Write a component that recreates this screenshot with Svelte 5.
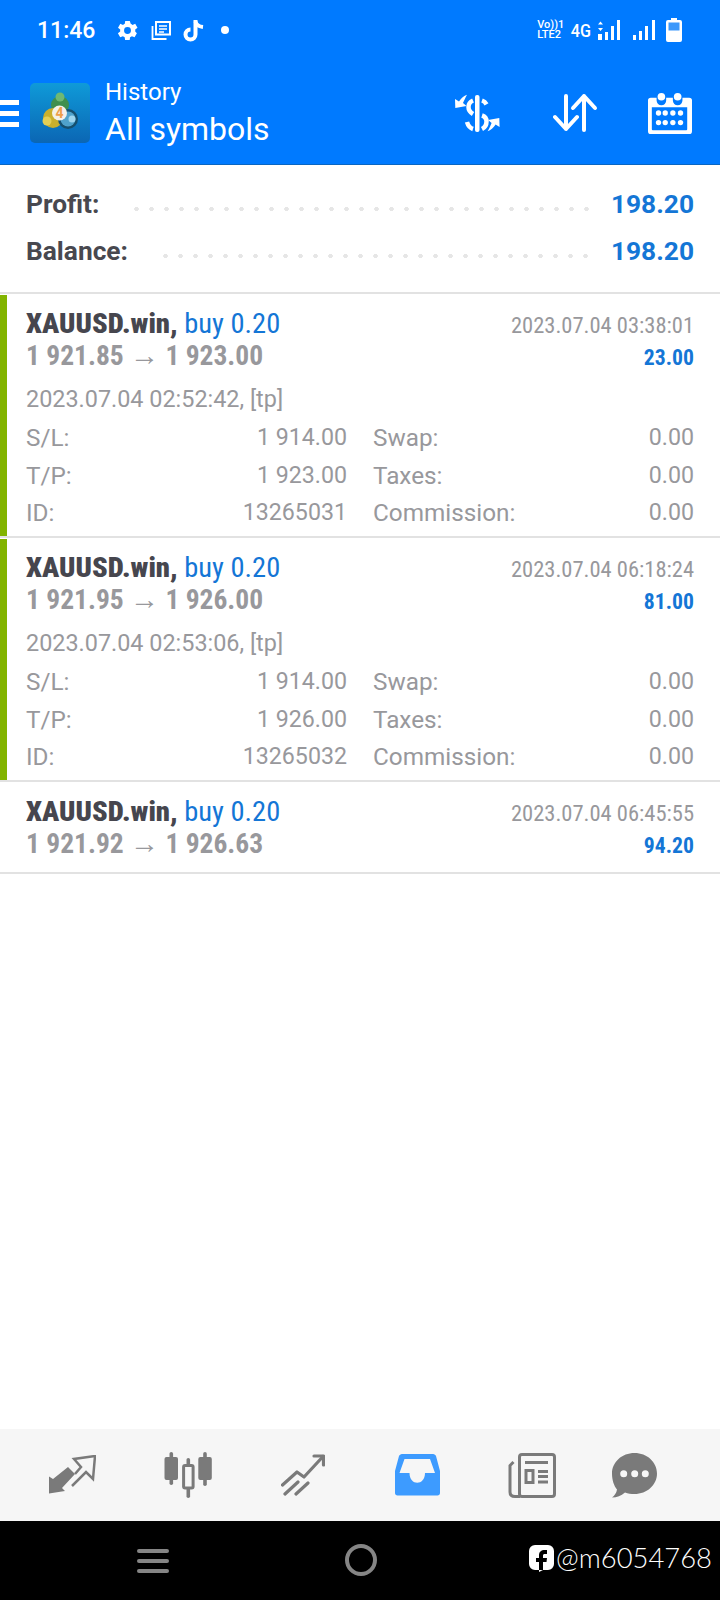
<script>
	const deals = [
		{ open: '1 921.85', close: '1 923.00', time: '2023.07.04 03:38:01', profit: '23.00', opened: '2023.07.04 02:52:42, [tp]', sl: '1 914.00', tp: '1 923.00', id: '13265031', expanded: true },
		{ open: '1 921.95', close: '1 926.00', time: '2023.07.04 06:18:24', profit: '81.00', opened: '2023.07.04 02:53:06, [tp]', sl: '1 914.00', tp: '1 926.00', id: '13265032', expanded: true },
		{ open: '1 921.92', close: '1 926.63', time: '2023.07.04 06:45:55', profit: '94.20', expanded: false }
	];
</script>

<div class="screen">
	<header class="top">
		<div class="status">
			<span class="clock">11:46</span>
			<div class="status-left">
				<svg width="25" height="25" viewBox="0 0 24 24" fill="#fff"><path fill-rule="evenodd" d="M19.400 13a7.500 7.500 0 0 0 0-2l2.200-1.700-2.200-3.700-2.600 1a7.600 7.600 0 0 0-1.700-1L14.200 2.800H9.800l-.4 2.800a7.600 7.600 0 0 0-1.700 1l-2.600-1-2.200 3.700L5 11a7.500 7.500 0 0 0 0 2l-2.200 1.700 2.200 3.700 2.600-1a7.600 7.600 0 0 0 1.700 1l.4 2.800h4.400l.4-2.800a7.600 7.600 0 0 0 1.700-1l2.600 1 2.200-3.700zM12 15.300a3.300 3.300 0 1 1 0-6.600 3.300 3.300 0 0 1 0 6.600z"/></svg>
				<svg width="21" height="21" viewBox="0 0 21 21" fill="none" stroke="#fff" stroke-width="2"><path d="M5 2h14v12.500H5z"/><path d="M1.500 6v13h14" stroke-width="1.800"/><path d="M8 6h8M8 9h8M8 12h5" stroke-width="1.700"/></svg>
				<svg width="21" height="23" viewBox="0 0 21 23" fill="none" stroke="#fff" stroke-width="4"><path d="M12.500 1v14.500a5 5 0 1 1-5-5"/><path d="M12.500 2.500c.5 3 3 5 7.500 5.500"/></svg>
				<span class="dot"></span>
			</div>
			<div class="status-right">
				<span class="volte">Vo))1<br />LTE2</span>
				<span class="net">4G</span>
				<svg width="22" height="20" viewBox="0 0 22 20" fill="#fff"><path d="M2.500 1.500l2.500 3H0zM2.500 11L0 8h5zM0 14h4v6H0zM7 12h3v8H7zM13 6h3v14h-3zM19 0h3v20h-3z"/></svg>
				<svg class="sim2" width="22" height="20" viewBox="0 0 22 20" fill="#fff"><path d="M0 15h3v5H0zM6 11h3v9H6zM12 6h3v14h-3zM19 0h3v20h-3z"/></svg>
				<svg class="battery" width="16" height="24" viewBox="0 0 16 24"><path fill="#fff" d="M5 0h6v2h3a2 2 0 0 1 2 2v18a2 2 0 0 1-2 2H2a2 2 0 0 1-2-2V4a2 2 0 0 1 2-2h3z"/><rect x="2.500" y="4.500" width="11" height="8" fill="#3c98fb"/></svg>
			</div>
		</div>
		<div class="bar">
			<div class="burger"><i></i><i></i><i></i></div>
			<svg class="logo" width="60" height="60" viewBox="0 0 60 60">
				<defs>
					<linearGradient id="tile" x1="0" y1="0" x2="0" y2="1"><stop offset="0" stop-color="#0f9ad8" /><stop offset="1" stop-color="#0b66b4" /></linearGradient>
				</defs>
				<rect width="60" height="60" rx="5" fill="url(#tile)" />
				<circle cx="30" cy="22" r="9" fill="#3f8f4e" />
				<circle cx="30" cy="14" r="4.500" fill="#6fb873" />
				<circle cx="23" cy="35" r="10" fill="#c9b02c" />
				<circle cx="17" cy="38" r="4.500" fill="#e3cf55" />
				<circle cx="38" cy="36" r="10" fill="#16506f" />
				<circle cx="38" cy="36" r="7.500" fill="#4fa2cc" />
				<circle cx="42" cy="36" r="3.500" fill="#9fd5ee" />
				<circle cx="29.500" cy="30" r="7.500" fill="#f4f1e8" />
				<text x="29.500" y="35" text-anchor="middle" class="logo-four">4</text>
			</svg>
			<div class="titles">
				<div class="sub">History</div>
				<div class="title">All symbols</div>
			</div>
			<div class="actions">
				<svg width="45" height="39" viewBox="0 0 45 39" fill="none" stroke="#fff">
					<rect x="20" y="1" width="4.500" height="37" rx="2" fill="#fff" stroke="none" />
					<path d="M18 6.500C14.500 8 13.500 10.500 13.500 13c0 3 2 5.500 4.500 7M27 6.500c2 .7 3.500 2 4.500 3.800M27 21.500c3 1 4.500 3 4.500 6 0 3-1.500 6-4.500 7.500M18 35c-3-1-5-3.500-6-7" stroke-width="4.500" />
					<path fill="#fff" stroke="none" d="M.3 14L0 5l4 2.500C6 4 9 2 12 .7 10 4 9 7 8 9l3.500 3z" />
					<path fill="#fff" stroke="none" d="M44.300 24l.3 9-4-2.500c-2 3.500-5 5.500-8 6.800 2-3.300 3-6.300 4-8.300L33.100 26z" />
				</svg>
				<svg class="updown" width="46" height="40" viewBox="0 0 46 40" fill="none" stroke="#fff" stroke-width="4" stroke-linecap="round" stroke-linejoin="round"><path d="M13 3v33M2 24l11 12 11-12" /><path d="M31 37V3M20 15L31 3l11 12" /></svg>
				<svg width="44" height="44" viewBox="0 0 46 46" fill="#fff">
					<circle cx="14" cy="6" r="4" /><circle cx="31" cy="6" r="4" />
					<path fill-rule="evenodd" d="M3 7h6v3a5 5 0 0 0 10 0V7h7v3a5 5 0 0 0 10 0V7h7a3 3 0 0 1 3 3v32a3 3 0 0 1-3 3H3a3 3 0 0 1-3-3V10a3 3 0 0 1 3-3zM4 17v23a1 1 0 0 0 1 1h35a1 1 0 0 0 1-1V17z" />
					<g><circle cx="11" cy="23" r="2.800" /><circle cx="18" cy="23" r="2.800" /><circle cx="26" cy="23" r="2.800" /><circle cx="34" cy="23" r="2.800" /><circle cx="11" cy="33" r="2.800" /><circle cx="18" cy="33" r="2.800" /><circle cx="26" cy="33" r="2.800" /><circle cx="34" cy="33" r="2.800" /></g>
				</svg>
			</div>
		</div>
	</header>

	<section class="summary">
		<div class="sum-row"><span class="sum-label">Profit:</span><span class="leader"></span><span class="sum-value">198.20</span></div>
		<div class="sum-row"><span class="sum-label">Balance:</span><span class="leader"></span><span class="sum-value">198.20</span></div>
	</section>

	<main class="list">
		{#each deals as d}
			<article class="deal" class:expanded={d.expanded}>
				<div class="head">
					<div class="name"><b>XAUUSD.win,</b> <span class="buy">buy 0.20</span></div>
					<div class="when">{d.time}</div>
				</div>
				<div class="head second">
					<div class="prices">{d.open} <span class="arrow">→</span> {d.close}</div>
					<div class="gain">{d.profit}</div>
				</div>
				{#if d.expanded}
					<div class="opened">{d.opened}</div>
					<div class="details">
						<div class="pair"><span>S/L:</span><span class="num">{d.sl}</span></div>
						<div class="pair"><span>Swap:</span><span class="num">0.00</span></div>
						<div class="pair"><span>T/P:</span><span class="num">{d.tp}</span></div>
						<div class="pair"><span>Taxes:</span><span class="num">0.00</span></div>
						<div class="pair"><span>ID:</span><span class="num">{d.id}</span></div>
						<div class="pair"><span>Commission:</span><span class="num">0.00</span></div>
					</div>
				{/if}
			</article>
		{/each}
	</main>

	<nav class="tabs">
		<svg width="47" height="40" viewBox="0 0 47 40">
			<path fill="#7a7a7a" d="M0 38.500V21.500L4 24 19 12l7 7-13 14 3 3z" />
			<path fill="none" stroke="#7a7a7a" stroke-width="2.500" d="M26 19l6-7-7-8 21-3-2 23-7-7-14 14" />
		</svg>
		<svg width="49" height="46" viewBox="0 0 49 46" fill="#7a7a7a">
			<rect x="5.500" y="0" width="3.600" height="33" rx="1.800" />
			<rect x=".5" y="5" width="13.500" height="23" rx="2" />
			<rect x="39.200" y="0" width="3.600" height="34" rx="1.800" />
			<rect x="34.300" y="5" width="13.500" height="23" rx="2" />
			<rect x="22.500" y="6" width="3.600" height="40" rx="1.800" />
			<rect x="19.600" y="13.500" width="9.500" height="22.500" rx="1.500" fill="#f6f6f6" stroke="#7a7a7a" stroke-width="3" />
		</svg>
		<svg width="44" height="42" viewBox="0 0 44 42" fill="none" stroke="#7a7a7a" stroke-width="3.200" stroke-linecap="round" stroke-linejoin="round">
			<path d="M1.500 31L16 18l7 5L42 2.500" /><path d="M33 2h9.500v9" /><path d="M4 40l13-12M15 40l12-11" />
		</svg>
		<svg class="inbox" width="45" height="42" viewBox="0 0 45 42"><path fill="#3d9bff" fill-rule="evenodd" d="M7 0h31c1.500 0 2.500 1 3 2l4 15v22c0 1.500-1 2.500-2.500 2.500h-40C1 41.500 0 40.500 0 39V17L4 2c.5-1 1.500-2 3-2zM9.500 5L4.500 19h10c0 13 15.500 13 15.500 0h10L35 5z" /></svg>
		<svg width="48" height="45" viewBox="0 0 48 45" fill="none" stroke="#7a7a7a" stroke-width="3">
			<rect x="11.500" y="1.500" width="35" height="42" rx="2.500" />
			<path d="M5.500 9L2 12.500V39c0 3 2 4.500 5 4.500h5" />
			<path d="M17 9.500h23M30 18.500h10M30 23.500h10M30 29h10" />
			<rect x="18" y="17.500" width="7" height="12" />
		</svg>
		<svg class="chat" width="45" height="45" viewBox="0 0 45 45" fill="#7a7a7a"><path fill-rule="evenodd" d="M22.500 0C35 0 45 9 45 20.500S35 41 22.500 41c-3.500 0-6.500-.5-9.500-1.500C9 43 5 44.500 0 44.500c2.500-2 4.500-4.500 5-8C2 33 0 27 0 20.500 0 9 10 0 22.500 0zM11.700 17.200a3.500 3.500 0 1 0 0 7 3.500 3.500 0 0 0 0-7zm11 0a3.500 3.500 0 1 0 0 7 3.500 3.500 0 0 0 0-7zm10.600 0a3.500 3.500 0 1 0 0 7 3.500 3.500 0 0 0 0-7z" /></svg>
	</nav>

	<footer class="system">
		<div class="sys-menu"><i></i><i></i><i></i></div>
		<span class="sys-home"></span>
		<div class="mark">
			<svg width="25" height="28" viewBox="0 0 25 28"><path fill="#fff" fill-rule="evenodd" d="M6 1h13a6 6 0 0 1 6 6v13a6 6 0 0 1-6 6h-5l-4 2v-2H6a6 6 0 0 1-6-6V7a6 6 0 0 1 6-6zm12 5h-2c-4 0-6 2-6 5v3H7v4h3v8h4v-8h3.500l.5-4h-4v-2.500c0-1 .5-1.500 2-1.500h2z" /></svg>
			<span>@m6054768</span>
		</div>
	</footer>
</div>

<style>
	:global(body) {
		margin: 0;
		background: #fff;
	}

	.screen {
		width: 720px;
		height: 1600px;
		display: flex;
		flex-direction: column;
		font-family: Roboto, 'Liberation Sans', sans-serif;
		overflow: hidden;
	}

	.top {
		height: 164px;
		background: #007aff;
		border-bottom: 1px solid #0a66c2;
		color: #fff;
		flex-shrink: 0;
	}

	.status {
		height: 62px;
		display: flex;
		align-items: center;
		padding: 0 0 2px 37px;
		box-sizing: border-box;
	}

	.clock {
		font-size: 23px;
		font-weight: 500;
		width: 78px;
	}

	.status-left {
		display: flex;
		align-items: center;
		gap: 11px;
	}

	.dot {
		width: 8px;
		height: 8px;
		margin-left: 6px;
		border-radius: 50%;
		background: #fff;
	}

	.status-right {
		margin-left: auto;
		margin-right: 38px;
		display: flex;
		align-items: center;
		gap: 8px;
	}

	.volte {
		font-size: 11px;
		line-height: 10px;
		font-weight: 500;
		margin-right: -3px;
	}

	.net {
		font-size: 19px;
		font-weight: 500;
		margin-right: -3px;
		transform: scaleX(0.85);
	}

	.sim2 {
		margin-left: 5px;
	}

	.battery {
		margin-left: 3px;
	}

	.bar {
		display: flex;
		height: 60px;
		margin-top: 21px;
	}

	.burger {
		width: 19px;
		align-self: center;
		display: flex;
		flex-direction: column;
		gap: 6px;
		margin-right: 11px;
	}

	.burger i {
		display: block;
		height: 5px;
		background: #fff;
	}

	.titles {
		margin-left: 15px;
		margin-top: -5px;
	}

	.sub {
		font-size: 24px;
		line-height: 28px;
	}

	.title {
		font-size: 32px;
		line-height: 42px;
		margin-top: 2px;
	}

	.actions {
		margin-left: auto;
		margin-right: 28px;
		display: flex;
		align-items: center;
		gap: 49px;
	}

	.updown {
		margin-left: 4px;
	}

	.logo-four {
		font-size: 14px;
		font-weight: 700;
		fill: #ef9f4a;
	}

	.summary {
		height: 129px;
		padding: 15px 26px 0;
		box-sizing: border-box;
		border-bottom: 2px solid #e2e2e2;
		flex-shrink: 0;
	}

	.sum-row {
		display: flex;
		align-items: center;
		height: 47px;
		font-size: 26.300px;
		font-weight: 700;
		color: #48484f;
	}

	.leader {
		flex: 1;
		height: 6px;
		margin: 10px 17px 0 30px;
		background: radial-gradient(circle, #e6e6e6 2px, transparent 2.500px) left center / 15px 6px repeat-x;
	}

	.sum-value {
		color: #1476d6;
	}

	.deal {
		box-sizing: border-box;
		padding: 13px 26px 0 26px;
		height: 244px;
		border-bottom: 2px solid #e2e2e2;
		position: relative;
		color: #98989c;
	}

	.deal:not(.expanded) {
		height: 92px;
	}

	.expanded::before {
		content: '';
		position: absolute;
		left: 0;
		top: 1px;
		bottom: 0;
		width: 7px;
		background: #82b400;
	}

	.head {
		display: flex;
		justify-content: space-between;
		align-items: baseline;
		height: 31px;
	}

	.second {
		margin-top: 1px;
	}

	.name {
		font-size: 28.500px;
		font-stretch: 75%;
		font-weight: 700;
		white-space: nowrap;
	}

	.prices {
		font-size: 27.500px;
		font-stretch: 75%;
		font-weight: 700;
		white-space: nowrap;
	}

	.name b {
		color: #46464e;
	}

	.buy {
		color: #1476d6;
		font-weight: 400;
	}

	.arrow {
		font-weight: 400;
		font-family: 'Liberation Sans', sans-serif;
		font-size: 29px;
	}

	.when {
		font-size: 22.500px;
		font-stretch: 75%;
	}

	.gain {
		font-size: 21.700px;
		font-weight: 700;
		font-stretch: 75%;
		color: #1476d6;
	}

	.opened {
		font-size: 23.400px;
		line-height: 39px;
		margin-top: 10px;
	}

	.details {
		display: grid;
		grid-template-columns: 1fr 1fr;
		column-gap: 26px;
		font-size: 24.300px;
		line-height: 37.500px;
	}

	.pair {
		display: flex;
		justify-content: space-between;
	}

	.num {
		font-size: 23.200px;
	}

	.list {
		flex: 1;
	}

	.tabs {
		height: 92px;
		background: #f6f6f6;
		display: flex;
		align-items: center;
		gap: 68px;
		padding-left: 49px;
		flex-shrink: 0;
	}

	.inbox {
		margin-left: 2px;
	}

	.chat {
		margin-left: -12px;
	}

	.system {
		height: 79px;
		background: #000;
		flex-shrink: 0;
		display: flex;
		align-items: center;
		position: relative;
	}

	.sys-menu {
		margin-left: 137px;
		width: 32px;
		display: flex;
		flex-direction: column;
		gap: 6px;
	}

	.sys-menu i {
		display: block;
		height: 4px;
		border-radius: 2px;
		background: #858585;
	}

	.sys-home {
		width: 24px;
		height: 24px;
		margin-left: 176px;
		margin-top: -1px;
		border: 4px solid #858585;
		border-radius: 50%;
	}

	.mark {
		position: absolute;
		right: 8px;
		top: 20px;
		display: flex;
		align-items: center;
		gap: 2px;
		color: #fff;
		font-family: Lato, sans-serif;
		font-weight: 300;
		font-size: 27.400px;
	}
</style>
